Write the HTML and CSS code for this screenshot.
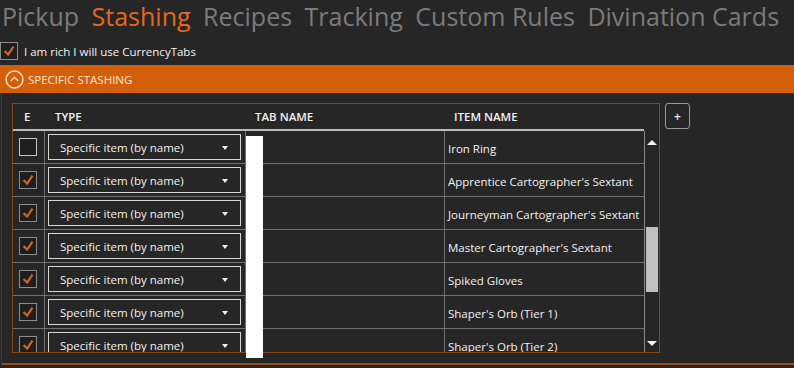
FILE: index.html
```html
<!DOCTYPE html>
<html lang="en">

<head>
    <meta charset="UTF-8" />
    <title>Stashing</title>
    <link rel="stylesheet" href="styles.css">
</head>

<body>

    <nav class="tabs">
        <span class="tab">Pickup</span>
        <span class="tab active">Stashing</span>
        <span class="tab">Recipes</span>
        <span class="tab">Tracking</span>
        <span class="tab">Custom Rules</span>
        <span class="tab">Divination Cards</span>
    </nav>

    <label class="rich">
        <span class="check on"><svg viewBox="0 0 18 18"><polyline points="4,9 8,13 14,4" /></svg></span>
        I am rich I will use CurrencyTabs
    </label>

    <div class="expander">
        <span class="expander_icon">
            <svg viewBox="0 0 18 18">
                <circle cx="9" cy="9" r="8" />
                <polyline points="5.5,10.5 9,7 12.5,10.5" />
            </svg>
        </span>
        SPECIFIC STASHING
    </div>

    <div class="panel">
        <div class="grid">
            <div class="head">
                <div class="cell col_e">E</div>
                <div class="cell col_type">TYPE</div>
                <div class="cell col_tab">TAB NAME</div>
                <div class="cell col_item">ITEM NAME</div>
            </div>
            <div class="body">
                <div class="rows">
                    <div class="row">
                        <div class="cell col_e"><span class="check"></span></div>
                        <div class="cell col_type"><div class="combo">Specific item (by name)<span class="caret"></span></div></div>
                        <div class="cell col_tab"></div>
                        <div class="cell col_item">Iron Ring</div>
                    </div>
                    <div class="row">
                        <div class="cell col_e"><span class="check on"><svg viewBox="0 0 18 18"><polyline points="4,9 8,13 14,4" /></svg></span></div>
                        <div class="cell col_type"><div class="combo">Specific item (by name)<span class="caret"></span></div></div>
                        <div class="cell col_tab"></div>
                        <div class="cell col_item">Apprentice Cartographer's Sextant</div>
                    </div>
                    <div class="row">
                        <div class="cell col_e"><span class="check on"><svg viewBox="0 0 18 18"><polyline points="4,9 8,13 14,4" /></svg></span></div>
                        <div class="cell col_type"><div class="combo">Specific item (by name)<span class="caret"></span></div></div>
                        <div class="cell col_tab"></div>
                        <div class="cell col_item">Journeyman Cartographer's Sextant</div>
                    </div>
                    <div class="row">
                        <div class="cell col_e"><span class="check on"><svg viewBox="0 0 18 18"><polyline points="4,9 8,13 14,4" /></svg></span></div>
                        <div class="cell col_type"><div class="combo">Specific item (by name)<span class="caret"></span></div></div>
                        <div class="cell col_tab"></div>
                        <div class="cell col_item">Master Cartographer's Sextant</div>
                    </div>
                    <div class="row">
                        <div class="cell col_e"><span class="check on"><svg viewBox="0 0 18 18"><polyline points="4,9 8,13 14,4" /></svg></span></div>
                        <div class="cell col_type"><div class="combo">Specific item (by name)<span class="caret"></span></div></div>
                        <div class="cell col_tab"></div>
                        <div class="cell col_item">Spiked Gloves</div>
                    </div>
                    <div class="row">
                        <div class="cell col_e"><span class="check on"><svg viewBox="0 0 18 18"><polyline points="4,9 8,13 14,4" /></svg></span></div>
                        <div class="cell col_type"><div class="combo">Specific item (by name)<span class="caret"></span></div></div>
                        <div class="cell col_tab"></div>
                        <div class="cell col_item">Shaper's Orb (Tier 1)</div>
                    </div>
                    <div class="row">
                        <div class="cell col_e"><span class="check on"><svg viewBox="0 0 18 18"><polyline points="4,9 8,13 14,4" /></svg></span></div>
                        <div class="cell col_type"><div class="combo">Specific item (by name)<span class="caret"></span></div></div>
                        <div class="cell col_tab"></div>
                        <div class="cell col_item">Shaper's Orb (Tier 2)</div>
                    </div>
                </div>
                <div class="scroll">
                    <span class="arrow up"></span>
                    <div class="track"><div class="thumb"></div></div>
                    <span class="arrow down"></span>
                </div>
            </div>
        </div>
        <button class="add">+</button>
        <div class="redact"></div>
    </div>

</body>

</html>
```

FILE: styles.css
```css
:root {
    --back: #262626;
    --orange: #d35f0b;
    --line: #6f6f6f;
    --text: #f2f2f2;
}

* {
    box-sizing: border-box;
    font-family: 'Open Sans', 'Noto Sans', sans-serif;
}

body {
    margin: 0;
    padding: 0;
    background-color: var(--back);
    color: var(--text);
    width: 794px;
    height: 368px;
    overflow: hidden;
}

/* tabs */

.tabs {
    display: flex;
    gap: 12.5px;
    padding-left: 2px;
    height: 32px;
    align-items: flex-start;
}

.tab {
    font-size: 25px;
    color: #7b7b7b;
    line-height: 32px;
}

.tab.active {
    color: #e2691f;
}

/* checkboxes */

.check {
    display: inline-flex;
    width: 18px;
    height: 18px;
    border: 1px solid #c6c6c6;
    background-color: #1e1e1e;
}

.check.on {
    border-color: #8c8c8c;
}

.check svg {
    width: 16px;
    height: 16px;
}

.check polyline {
    fill: none;
    stroke: #d4651f;
    stroke-width: 2.4;
}

.rich {
    display: flex;
    align-items: center;
    gap: 6px;
    height: 20px;
    margin-top: 9px;
    font-size: 11.5px;
}

/* expander */

.expander {
    margin-top: 4px;
    height: 28px;
    background-color: var(--orange);
    color: #ffe8cf;
    font-size: 11.5px;
    display: flex;
    align-items: center;
    gap: 4px;
    padding-left: 5px;
}

.expander_icon svg {
    display: block;
    width: 19px;
    height: 19px;
}

.expander_icon circle,
.expander_icon polyline {
    fill: none;
    stroke: #ffe8cf;
    stroke-width: 1.3;
}

/* panel + grid */

.panel {
    position: relative;
    display: flex;
    align-items: flex-start;
    gap: 5px;
    height: 272px;
    padding: 10px 0 0 10px;
    border-left: 1px solid #5a3414;
    margin-left: 1px;
    border-bottom: 2px solid #9a4c17;
}

.grid {
    width: 648px;
    height: 250px;
    border: 1px solid #8a4516;
    display: flex;
    flex-direction: column;
    overflow: hidden;
}

.head {
    display: flex;
    width: 631px;
    height: 27px;
    border-bottom: 2px solid #bdbdbd;
    font-size: 11.5px;
    font-weight: 600;
}

.head .cell {
    display: flex;
    align-items: center;
}

.head .col_e {
    padding-left: 11px;
}

.head .col_type {
    padding-left: 10px;
}

.head .col_tab {
    padding-left: 9px;
}

.head .col_item {
    padding-left: 9px;
}

.body {
    display: flex;
    flex: 1;
    min-height: 0;
}

.rows {
    width: 631px;
    overflow: hidden;
}

.row {
    display: flex;
    height: 33px;
    border-bottom: 1px solid var(--line);
    font-size: 11.5px;
}

.cell {
    flex: none;
}

.col_e {
    width: 32px;
}

.col_type {
    width: 201px;
}

.col_tab {
    width: 199px;
}

.col_item {
    width: 199px;
}

.row .cell {
    border-right: 1px solid var(--line);
    display: flex;
    align-items: center;
}

.row .col_item {
    border-right: 0;
    padding-left: 3px;
    padding-top: 2px;
    white-space: nowrap;
}

.row .col_e {
    justify-content: center;
    padding-right: 1px;
}

.combo {
    width: 193px;
    height: 26px;
    margin-left: 3px;
    border: 1px solid #d6d6d6;
    display: flex;
    align-items: center;
    justify-content: space-between;
    padding: 1px 12px 0 11px;
}

.caret {
    width: 0;
    height: 0;
    border-left: 3px solid transparent;
    border-right: 3px solid transparent;
    border-top: 4px solid #f2f2f2;
}

/* scrollbar */

.scroll {
    width: 15px;
    border-left: 1px solid #8a8a8a;
    display: flex;
    flex-direction: column;
    align-items: center;
}

.arrow {
    width: 0;
    height: 0;
    border-left: 5px solid transparent;
    border-right: 5px solid transparent;
}

.arrow.up {
    margin-top: 9px;
    border-bottom: 5px solid #f2f2f2;
}

.arrow.down {
    margin-bottom: 6px;
    border-top: 5px solid #f2f2f2;
}

.track {
    flex: 1;
    width: 100%;
    padding: 0 1px;
}

.thumb {
    margin-top: 82px;
    height: 65px;
    background-color: #c0c0c0;
}

.add {
    width: 25px;
    height: 26px;
    padding: 0;
    border: 1px solid #9a9a9a;
    border-radius: 3px;
    background-color: var(--back);
    color: #f2f2f2;
    font-size: 12px;
    font-weight: 600;
}

/* white strip painted over the tab name column */
.redact {
    position: absolute;
    left: 244px;
    top: 43px;
    width: 17px;
    height: 222px;
    background-color: #fff;
}
```
